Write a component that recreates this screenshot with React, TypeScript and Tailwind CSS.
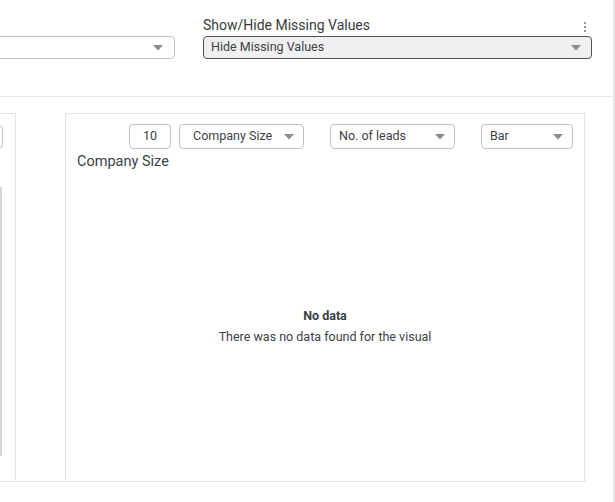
import React from 'react';

function Caret() {
    return (
        <svg width="10" height="6" viewBox="0 0 10 6" className="shrink-0">
            <path d="M0 0 L10 0 L5 5.5 Z" fill="#8c8c8c" />
        </svg>
    );
}

function Select({ label, className }: { label: string; className: string }) {
    return (
        <div className={`flex h-[25px] items-center justify-between rounded-[4px] border border-[#c2c2c2] bg-white pr-[9px] text-[12.5px] text-[#3d4148] ${className}`}>
            <span className="truncate">{label}</span>
            <Caret />
        </div>
    );
}

export default function App() {
    return (
        <div className="flex h-[502px] w-[615px] overflow-hidden bg-white" style={{ fontFamily: 'Roboto, "Liberation Sans", sans-serif' }}>
            <div className="w-[613px] shrink-0">
                {/* filters */}
                <div className="flex h-[97px] border-b border-[#e6e6e6] pt-[14px]">
                    <div className="w-[175px] shrink-0 pt-[22px]">
                        <div className="-ml-[60px] flex h-[23px] w-[235px] items-center justify-end rounded-[4px] border border-[#c4c4c4] bg-white pr-[11px]">
                            <Caret />
                        </div>
                    </div>
                    <div className="ml-[28px] w-[389px] shrink-0">
                        <div className="flex h-[22px] items-center justify-between">
                            <span className="text-[14px] leading-none text-[#3a3a3a]">Show/Hide Missing Values</span>
                            <svg width="4" height="12" viewBox="0 0 4 12" className="mr-[5px] mt-[4px]">
                                <circle cx="2" cy="2" r="1" fill="#777" />
                                <circle cx="2" cy="6" r="1" fill="#777" />
                                <circle cx="2" cy="10" r="1" fill="#777" />
                            </svg>
                        </div>
                        <div className="flex h-[23px] items-center justify-between rounded-[4px] border border-[#4f5359] bg-[#f0f0f0] pl-[7px] pr-[10px] text-[12.5px] text-[#3d4148]">
                            <span>Hide Missing Values</span>
                            <Caret />
                        </div>
                    </div>
                </div>

                {/* panels */}
                <div className="pt-[16px]">
                    <div className="flex w-[585px] border-b border-[#e4e4e4]">
                        <div className="-ml-[184px] flex h-[368px] w-[200px] shrink-0 flex-col border-x border-t border-[#e4e4e4] pr-[12px] pt-[11px]">
                            <div className="h-[24px] rounded-[4px] border border-[#c2c2c2]" />
                            <div className="mt-[38px] h-[269px] w-[185px] border-2 border-[#d6d6d6]" />
                        </div>
                        <div className="ml-[49px] flex h-[368px] w-[520px] shrink-0 flex-col border-x border-t border-[#e4e4e4] px-[11px] pt-[10px]">
                            <div className="flex items-center justify-end">
                                <div className="flex h-[25px] w-[42px] items-center justify-center rounded-[4px] border border-[#c2c2c2] text-[12.5px] text-[#3d4148]">
                                    10
                                </div>
                                <Select label="Company Size" className="ml-[8px] w-[125px] pl-[13px]" />
                                <Select label="No. of leads" className="ml-[26px] w-[125px] pl-[8px]" />
                                <Select label="Bar" className="ml-[26px] w-[92px] pl-[8px]" />
                            </div>
                            <div className="mt-[4px] text-[14.5px] leading-[18px] text-[#3a3f47]">Company Size</div>
                            <div className="flex flex-1 flex-col items-center justify-center pb-[1px] text-[12.5px] text-[#3a3f47]">
                                <div className="font-bold leading-[21px]">No data</div>
                                <div className="leading-[21px]">There was no data found for the visual</div>
                            </div>
                        </div>
                    </div>
                </div>
            </div>
            <div className="h-[502px] w-[2px] shrink-0 bg-[#e8e8e8]" />
        </div>
    );
}
